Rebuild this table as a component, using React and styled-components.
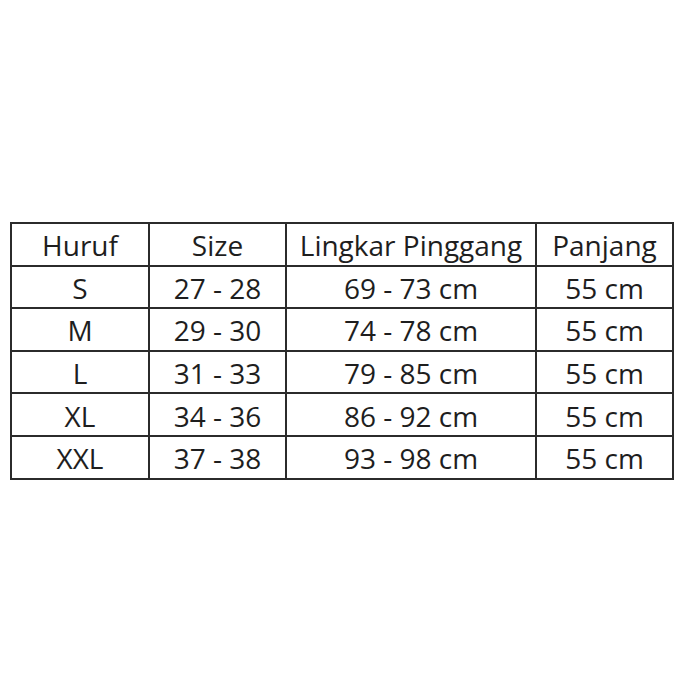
import React from 'react'
import styled, { createGlobalStyle } from 'styled-components'

const GlobalStyle = createGlobalStyle`
  html, body {
    margin: 0;
    padding: 0;
    background: #ffffff;
  }
`

const rows = [
  ['S', '27 - 28', '69 - 73 cm', '55 cm'],
  ['M', '29 - 30', '74 - 78 cm', '55 cm'],
  ['L', '31 - 33', '79 - 85 cm', '55 cm'],
  ['XL', '34 - 36', '86 - 92 cm', '55 cm'],
  ['XXL', '37 - 38', '93 - 98 cm', '55 cm'],
]

const headers = ['Huruf', 'Size', 'Lingkar Pinggang', 'Panjang']
const widths = [138, 137, 250, 137]

function App() {
  return (
    <Page>
      <GlobalStyle />
      <SizeTable>
        <colgroup>
          {widths.map((w, i) => <col key={i} style={{ width: w }} />)}
        </colgroup>
        <thead>
          <tr>
            {headers.map(h => <Cell as="th" key={h}>{h}</Cell>)}
          </tr>
        </thead>
        <tbody>
          {rows.map(r => (
            <tr key={r[0]}>
              {r.map((c, i) => <Cell key={i}>{c}</Cell>)}
            </tr>
          ))}
        </tbody>
      </SizeTable>
    </Page>
  )
}

const Page = styled.div`
  width: 686px;
  height: 686px;
  box-sizing: border-box;
  padding: 222px 0 0 10px;
  background: #fff;
`

const SizeTable = styled.table`
  border-collapse: collapse;
  table-layout: fixed;
  width: 662px;
  border: 2px solid #2b2b2b;
`

const Cell = styled.td`
  border: 2px solid #2b2b2b;
  height: 38.6px;
  padding: 2px 0 0;
  text-align: center;
  vertical-align: middle;
  font-family: "Open Sans", Lato, sans-serif;
  font-weight: 400;
  font-size: 28px;
  color: #1e1e1e;
  line-height: 1;
`

export default App
